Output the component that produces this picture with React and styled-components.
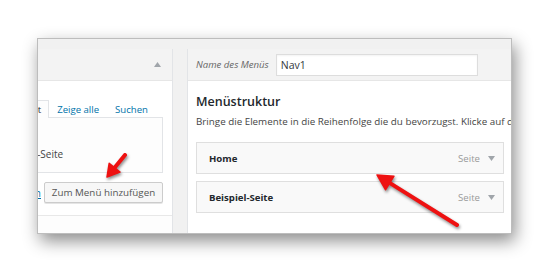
import React from 'react'
import styled, { createGlobalStyle } from 'styled-components'

const GlobalStyle = createGlobalStyle`
  html, body {
    margin: 0;
    padding: 0;
    background: #ffffff;
  }
  body {
    width: 550px;
    height: 273px;
    overflow: hidden;
    font-family: "Open Sans", "Noto Sans", sans-serif;
    color: #23282d;
  }
`

const items = [{ title: 'Home' }, { title: 'Beispiel-Seite' }]

function Triangle({ up }) {
  return (
    <svg width="7" height="5" viewBox="0 0 7 5">
      {up ? <polygon points="0,5 7,5 3.5,0" fill="#a0a5aa" /> : <polygon points="0,0 7,0 3.5,5" fill="#a0a5aa" />}
    </svg>
  )
}

function Arrow({ tail, tip, head = 13, half = 7 }) {
  const dx = tip[0] - tail[0]
  const dy = tip[1] - tail[1]
  const len = Math.hypot(dx, dy)
  const ux = dx / len
  const uy = dy / len
  const bx = tip[0] - ux * head
  const by = tip[1] - uy * head
  const nx = -uy
  const ny = ux
  const pts = `${tip[0]},${tip[1]} ${bx + nx * half},${by + ny * half} ${bx - nx * half},${by - ny * half}`
  return (
    <g>
      <line x1={tail[0]} y1={tail[1]} x2={bx + ux * 2} y2={by + uy * 2} stroke="#ee1111" strokeWidth="4" strokeLinecap="round" />
      <polygon points={pts} fill="#ee1111" stroke="#ee1111" strokeWidth="1.5" strokeLinejoin="round" />
    </g>
  )
}

export default function App() {
  return (
    <>
      <GlobalStyle />
      <Page>
        <Window>
          <LeftPanel>
            <LeftInner>
              <SectionHeader>
                <Triangle up />
              </SectionHeader>
              <SectionBody>
                <Tabs>
                  <Tab $active>Zuletzt erstellt</Tab>
                  <Tab>Zeige alle</Tab>
                  <Tab>Suchen</Tab>
                </Tabs>
                <TabBox>
                  <CheckRow>
                    <Check />
                    Beispiel-Seite
                  </CheckRow>
                </TabBox>
                <ActionRow>
                  <SelectAll>Alle auswählen</SelectAll>
                  <Button>Zum Menü hinzufügen</Button>
                </ActionRow>
              </SectionBody>
              <SectionHeader $bottom>
                <Triangle />
              </SectionHeader>
            </LeftInner>
          </LeftPanel>

          <RightPanel>
            <MenuHeader>
              <NameLabel>Name des Menüs</NameLabel>
              <NameInput defaultValue="Nav1" />
            </MenuHeader>
            <MenuBody>
              <Heading>Menüstruktur</Heading>
              <Hint>Bringe die Elemente in die Reihenfolge die du bevorzugst. Klicke auf den Pfeil rechts neben dem Element.</Hint>
              <ItemList>
                {items.map((it) => (
                  <MenuItem key={it.title}>
                    <ItemTitle>{it.title}</ItemTitle>
                    <ItemType>
                      Seite
                      <Triangle />
                    </ItemType>
                  </MenuItem>
                ))}
              </ItemList>
            </MenuBody>
          </RightPanel>
        </Window>

        <Arrows width="550" height="273" viewBox="0 0 550 273">
          <Arrow tail={[125, 155]} tip={[107, 177]} head={12} half={7} />
          <Arrow tail={[457, 225]} tip={[377, 175]} head={15} half={8} />
        </Arrows>
      </Page>
    </>
  )
}

const Page = styled.div`
  position: relative;
  width: 550px;
  height: 273px;
  padding: 38px 0 0 37px;
  box-sizing: border-box;
`

const Window = styled.div`
  width: 475px;
  height: 196px;
  box-sizing: border-box;
  background: #f1f1f1;
  border: 1px solid #bdbdbd;
  box-shadow: 3px 7px 16px rgba(0, 0, 0, 0.45);
  overflow: hidden;
  display: flex;
  gap: 14px;
  padding-top: 10px;
`

const LeftPanel = styled.div`
  flex: 0 0 135px;
  display: flex;
  justify-content: flex-end;
  overflow: hidden;
  background: #ffffff;
  border-right: 1px solid #e2e4e7;
  box-sizing: border-box;
`

const LeftInner = styled.div`
  flex: 0 0 230px;
  display: flex;
  flex-direction: column;
`

const SectionHeader = styled.div`
  height: 32px;
  box-sizing: border-box;
  flex-shrink: 0;
  display: flex;
  align-items: center;
  justify-content: flex-end;
  padding-right: 11px;
  background: ${(p) => (p.$bottom ? '#fdfdfd' : '#f3f3f3')};
  border-top: ${(p) => (p.$bottom ? '1px solid #e8e8e8' : 'none')};
  border-bottom: ${(p) => (p.$bottom ? 'none' : '1px solid #e6e6e6')};
  svg {
    margin-top: ${(p) => (p.$bottom ? '12px' : '0')};
  }
`

const SectionBody = styled.div`
  padding: 18px 9px 12px 10px;
  display: flex;
  flex-direction: column;
`

const Tabs = styled.div`
  display: flex;
  align-items: flex-end;
  justify-content: flex-end;
  height: 18px;
  padding-right: 7px;
`

const Tab = styled.div`
  flex-shrink: 0;
  height: 18px;
  box-sizing: border-box;
  padding: 0 7px;
  font-size: 9.6px;
  line-height: 18px;
  white-space: nowrap;
  color: ${(p) => (p.$active ? '#23282d' : '#0073aa')};
  background: ${(p) => (p.$active ? '#fdfdfd' : 'transparent')};
  border: 1px solid ${(p) => (p.$active ? '#e2e4e7' : 'transparent')};
  border-bottom: none;
  margin-bottom: -1px;
  position: relative;
  z-index: 1;
`

const TabBox = styled.div`
  height: 56px;
  box-sizing: border-box;
  border: 1px solid #e2e4e7;
  background: #fdfdfd;
  display: flex;
  flex-direction: column;
  justify-content: flex-end;
  padding: 0 0 11px 30px;
`

const CheckRow = styled.label`
  display: flex;
  align-items: center;
  gap: 6px;
  font-size: 10px;
  color: #444;
`

const Check = styled.span`
  width: 10px;
  height: 10px;
  border: 1px solid #b4b9be;
  background: #fff;
`

const ActionRow = styled.div`
  display: flex;
  align-items: center;
  justify-content: flex-end;
  gap: 3px;
  margin-top: 9px;
`

const SelectAll = styled.a`
  font-size: 10px;
  color: #0073aa;
  text-decoration: underline;
  white-space: nowrap;
`

const Button = styled.button`
  flex-shrink: 0;
  height: 21px;
  width: 119px;
  padding: 0;
  box-sizing: border-box;
  font-family: inherit;
  font-size: 9.8px;
  color: #555;
  background: #f7f7f7;
  border: 1px solid #cccccc;
  border-radius: 2px;
  box-shadow: 0 1px 0 #e5e5e5;
`

const RightPanel = styled.div`
  flex: 0 0 340px;
  background: #ffffff;
  border-left: 1px solid #e2e4e7;
  display: flex;
  flex-direction: column;
`

const MenuHeader = styled.div`
  height: 32px;
  box-sizing: border-box;
  display: flex;
  align-items: center;
  gap: 7px;
  padding: 0 8px;
  background: #f3f3f3;
  border-bottom: 1px solid #e6e6e6;
`

const NameLabel = styled.span`
  font-size: 9.6px;
  font-style: italic;
  color: #666;
`

const NameInput = styled.input`
  width: 202px;
  height: 22px;
  box-sizing: border-box;
  border: 1px solid #dddddd;
  background: #ffffff;
  padding: 0 4px;
  font-family: inherit;
  font-size: 10.5px;
  color: #32373c;
  outline: none;
  box-shadow: inset 0 1px 2px rgba(0, 0, 0, 0.05);
`

const MenuBody = styled.div`
  padding: 12px 8px 0;
`

const Heading = styled.h3`
  margin: 0;
  font-size: 12.5px;
  font-weight: 600;
  line-height: 18px;
  color: #23282d;
`

const Hint = styled.p`
  margin: 4px 0 0;
  font-size: 9.8px;
  line-height: 14px;
  color: #444;
  white-space: nowrap;
`

const ItemList = styled.div`
  margin-top: 13px;
  display: flex;
  flex-direction: column;
  gap: 7px;
`

const MenuItem = styled.div`
  width: 308px;
  height: 32px;
  box-sizing: border-box;
  display: flex;
  align-items: center;
  justify-content: space-between;
  padding: 0 8px 0 12px;
  background: #f9f9f9;
  border: 1px solid #dfdfdf;
`

const ItemTitle = styled.span`
  font-size: 9.6px;
  font-weight: 700;
  color: #23282d;
`

const ItemType = styled.span`
  display: flex;
  align-items: center;
  gap: 8px;
  font-size: 9.6px;
  color: #999;
`

const Arrows = styled.svg`
  position: absolute;
  left: 0;
  top: 0;
  pointer-events: none;
  filter: drop-shadow(1px 2px 1.5px rgba(0, 0, 0, 0.45));
`
